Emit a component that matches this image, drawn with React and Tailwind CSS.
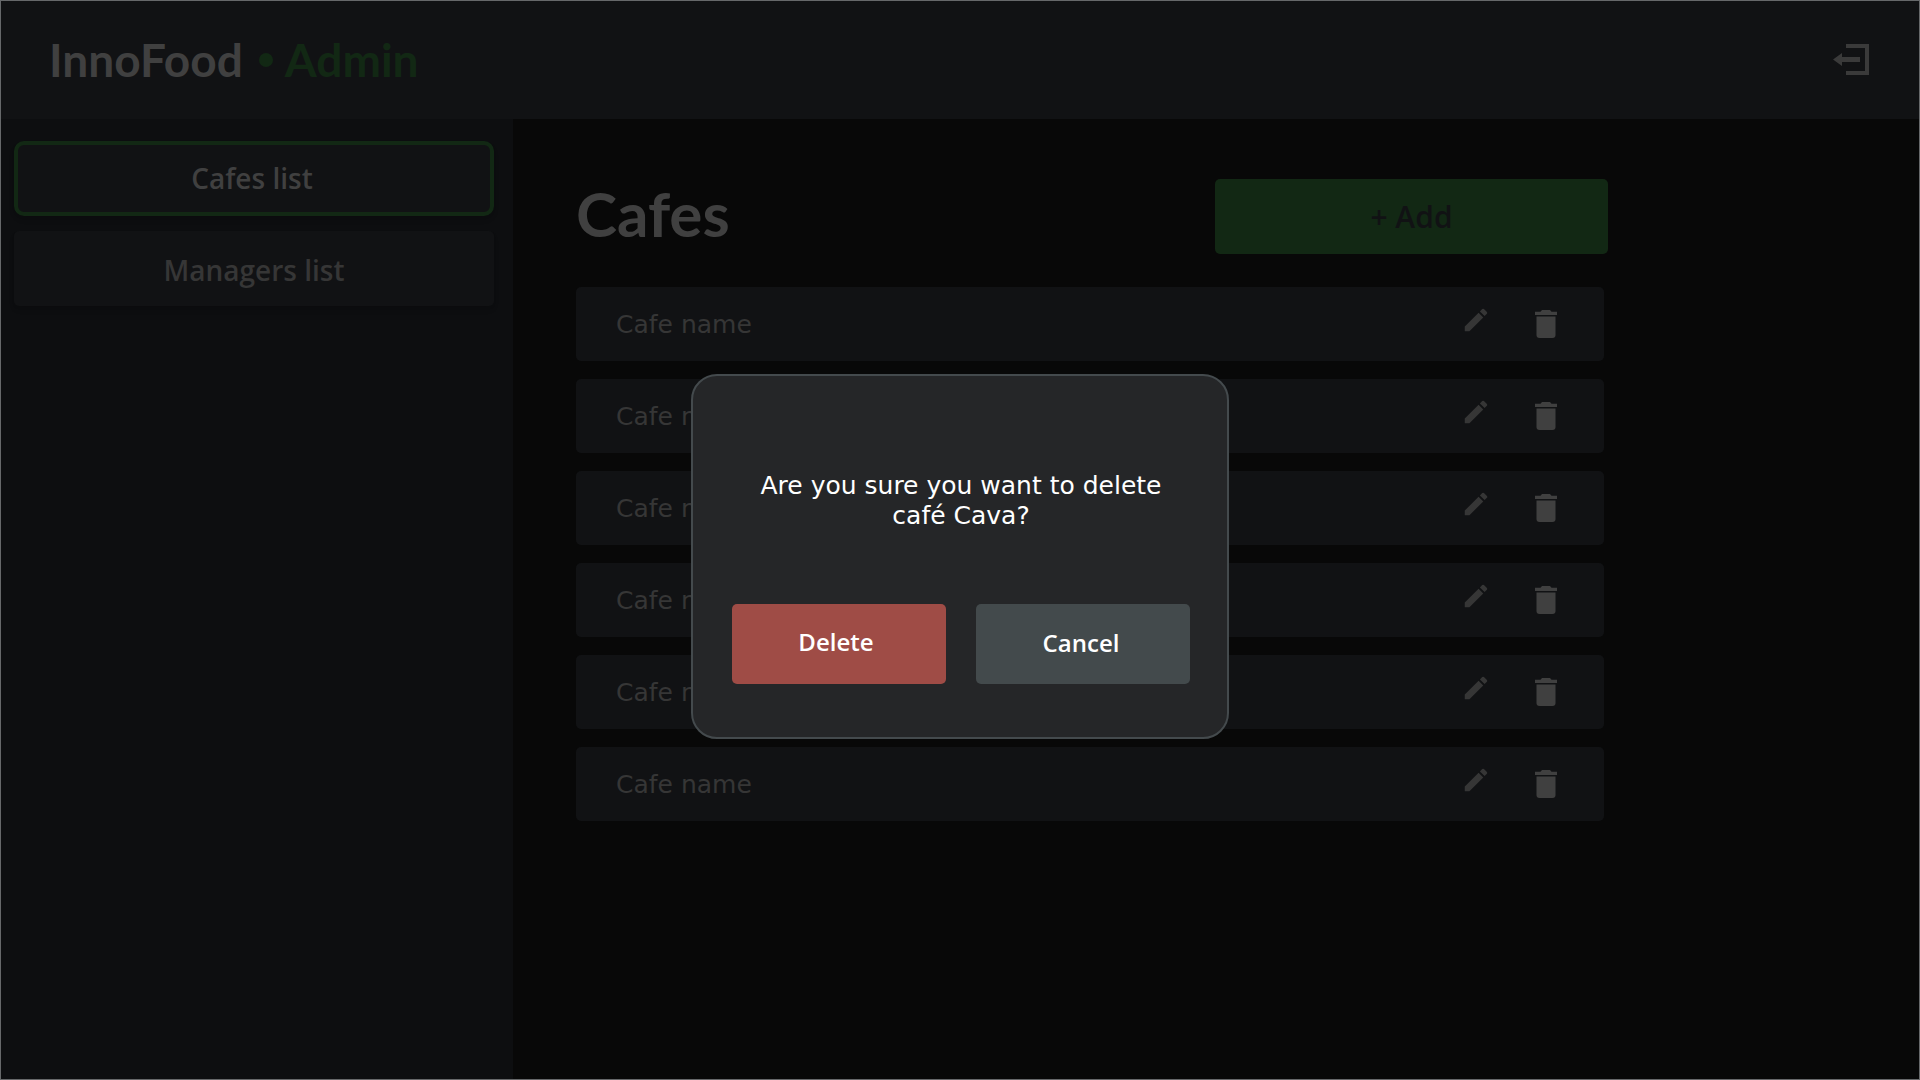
const cafes = [1, 2, 3, 4, 5, 6];

function LogoutIcon() {
  return (
    <svg className="h-8 w-9" viewBox="0 0 36 32" fill="currentColor" aria-hidden="true">
      <path d="M13 0H36V31H13V27H32V4H13Z" />
      <path d="M0 15.500L9 9V13H27V18H9V22Z" />
    </svg>
  );
}

function PencilIcon() {
  return (
    <svg className="size-[30px]" viewBox="0 0 24 24" fill="currentColor" aria-hidden="true">
      <path d="M3 17.250V21h3.750L17.810 9.940l-3.750-3.750L3 17.250zM20.710 7.040a1 1 0 0 0 0-1.410l-2.340-2.340a1 1 0 0 0-1.410 0l-1.830 1.830 3.750 3.750 1.830-1.830z" />
    </svg>
  );
}

function TrashIcon() {
  return (
    <svg className="h-7 w-[22px]" viewBox="0 0 22 28" fill="currentColor" aria-hidden="true">
      <path d="M7 0H15L16.500 1.700H22V5H0V1.700H5.500Z" />
      <path d="M1.500 6.500H20.500V25Q20.500 28 17.500 28H4.500Q1.500 28 1.500 25Z" />
    </svg>
  );
}

export default function App() {
  return (
    <div className="flex min-h-screen flex-col border border-[#66686a] bg-[#080808] font-['Open_Sans',sans-serif] text-[#404040]">
      <header className="flex h-[118px] items-center justify-between bg-[#111214] pr-[50px] pl-12">
        <p className="flex items-center font-['Lato',sans-serif] text-[46px] leading-none font-bold">
          <span>InnoFood</span>
          <span className="mr-3 ml-4 size-3.5 rounded-full bg-[#122814]" />
          <span className="text-[#122814]">Admin</span>
        </p>
        <button type="button" aria-label="Log out" className="text-[#3a3a3a]">
          <LogoutIcon />
        </button>
      </header>

      <div className="flex flex-1">
        <nav className="flex w-[512px] shrink-0 flex-col gap-[15px] bg-[#0d0e10] pt-[22px] pr-[19px] pl-[13px] text-[28px] font-semibold">
          <button type="button" className="h-[75px] rounded-[10px] border-4 border-[#122814] bg-[#111214] pr-1 pb-0.5 shadow-md">
            Cafes list
          </button>
          <button type="button" className="h-[75px] rounded-[5px] bg-[#111214] pt-0.5 text-[#363636] shadow-md">
            Managers list
          </button>
        </nav>

        <main className="flex-1 pt-[60px] pl-[63px]">
          <div className="flex w-full max-w-[1032px] items-center justify-between">
            <h1 className="pb-2 font-['Lato',sans-serif] text-[62px] leading-none font-bold">Cafes</h1>
            <button type="button" className="h-[75px] w-[393px] rounded-[5px] bg-[#122814] text-3xl font-semibold text-[#111214]">
              + Add
            </button>
          </div>
          <ul className="mt-[33px] flex w-full max-w-[1028px] flex-col gap-[18px]">
            {cafes.map((id) => (
              <li key={id} className="flex h-[74px] items-center rounded-[5px] bg-[#111214] pr-[47px] pl-10">
                <span className="flex-1 pt-0.5 font-['DejaVu_Sans',sans-serif] text-[25px] text-[#363636]">Cafe name</span>
                <button type="button" aria-label="Edit cafe" className="mr-11 pb-2 text-[#363636]">
                  <PencilIcon />
                </button>
                <button type="button" aria-label="Delete cafe">
                  <TrashIcon />
                </button>
              </li>
            ))}
          </ul>
        </main>
      </div>

      <div className="fixed inset-0 flex items-center justify-center">
        <div
          role="dialog"
          aria-modal="true"
          aria-labelledby="confirm-text"
          className="mt-8 w-[538px] rounded-[26px] border-2 border-[#444a4d] bg-[#252628] pt-[95px] pr-[37px] pb-[53px] pl-[39px] text-white"
        >
          <p id="confirm-text" className="text-center font-['DejaVu_Sans',sans-serif] text-[25px] leading-[30px]">
            Are you sure you want to delete café Cava?
          </p>
          <div className="mt-[73px] grid grid-cols-2 gap-[30px] text-2xl font-semibold">
            <button type="button" className="h-20 rounded-[5px] bg-[#9f4c46] pr-1.5 pb-1">
              Delete
            </button>
            <button type="button" className="h-20 rounded-[5px] bg-[#434a4c] pr-1 pb-0.5">
              Cancel
            </button>
          </div>
        </div>
      </div>
    </div>
  );
}
